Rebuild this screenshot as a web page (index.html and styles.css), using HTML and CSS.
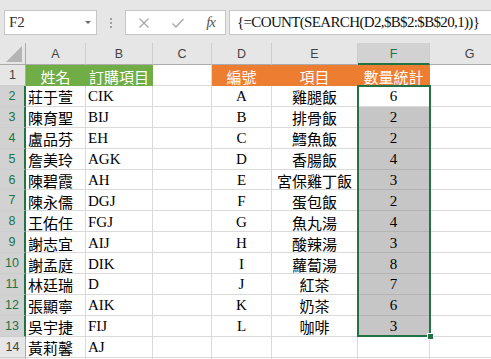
FILE: index.html
```html
<!DOCTYPE html>
<html>
<head>
    <meta charset="utf-8">
    <title>數量統計</title>
    <link rel="stylesheet" href="styles.css">
</head>
<body>
    <div class="toolbar">
        <div class="namebox"><span>F2</span><i class="caret"></i></div>
        <div class="grip"><i></i><i></i><i></i></div>
        <div class="fbtns">
            <svg class="icon" width="12" height="12" viewBox="0 0 12 12"><path d="M1.5 1.5L10.5 10.5M10.5 1.5L1.5 10.5" stroke="#a8a8a8" stroke-width="1.3" fill="none"/></svg>
            <svg class="icon" width="14" height="12" viewBox="0 0 14 12"><path d="M1.5 6.5L5 10L12.5 2" stroke="#a8a8a8" stroke-width="1.4" fill="none"/></svg>
            <span class="fx">fx</span>
        </div>
        <div class="formula">{=COUNT(SEARCH(D2,$B$2:$B$20,1))}</div>
    </div>

    <div class="sheet">
        <!-- column headers -->
        <div class="corner"><svg width="16" height="16" viewBox="0 0 16 16"><path d="M16 0V16H0Z" fill="#b4b4b4"/></svg></div>
        <div class="ch">A</div>
        <div class="ch">B</div>
        <div class="ch">C</div>
        <div class="ch">D</div>
        <div class="ch">E</div>
        <div class="ch active">F</div>
        <div class="ch">G</div>

        <!-- row 1 -->
        <div class="rh">1</div>
        <div class="cell grn">姓名</div>
        <div class="cell grn">訂購項目</div>
        <div class="cell"></div>
        <div class="cell org">編號</div>
        <div class="cell org">項目</div>
        <div class="cell org">數量統計</div>
        <div class="cell"></div>

        <div class="rh on">2</div>
        <div class="cell">莊于萱</div><div class="cell">CIK</div><div class="cell"></div>
        <div class="cell ctr">A</div><div class="cell ctr">雞腿飯</div><div class="cell ctr">6</div><div class="cell"></div>

        <div class="rh on">3</div>
        <div class="cell">陳育聖</div><div class="cell">BIJ</div><div class="cell"></div>
        <div class="cell ctr">B</div><div class="cell ctr">排骨飯</div><div class="cell ctr sel">2</div><div class="cell"></div>

        <div class="rh on">4</div>
        <div class="cell">盧品芬</div><div class="cell">EH</div><div class="cell"></div>
        <div class="cell ctr">C</div><div class="cell ctr">鱈魚飯</div><div class="cell ctr sel">2</div><div class="cell"></div>

        <div class="rh on">5</div>
        <div class="cell">詹美玲</div><div class="cell">AGK</div><div class="cell"></div>
        <div class="cell ctr">D</div><div class="cell ctr">香腸飯</div><div class="cell ctr sel">4</div><div class="cell"></div>

        <div class="rh on">6</div>
        <div class="cell">陳碧霞</div><div class="cell">AH</div><div class="cell"></div>
        <div class="cell ctr">E</div><div class="cell ctr">宮保雞丁飯</div><div class="cell ctr sel">3</div><div class="cell"></div>

        <div class="rh on">7</div>
        <div class="cell">陳永儒</div><div class="cell">DGJ</div><div class="cell"></div>
        <div class="cell ctr">F</div><div class="cell ctr">蛋包飯</div><div class="cell ctr sel">2</div><div class="cell"></div>

        <div class="rh on">8</div>
        <div class="cell">王佑任</div><div class="cell">FGJ</div><div class="cell"></div>
        <div class="cell ctr">G</div><div class="cell ctr">魚丸湯</div><div class="cell ctr sel">4</div><div class="cell"></div>

        <div class="rh on">9</div>
        <div class="cell">謝志宜</div><div class="cell">AIJ</div><div class="cell"></div>
        <div class="cell ctr">H</div><div class="cell ctr">酸辣湯</div><div class="cell ctr sel">3</div><div class="cell"></div>

        <div class="rh on">10</div>
        <div class="cell">謝孟庭</div><div class="cell">DIK</div><div class="cell"></div>
        <div class="cell ctr">I</div><div class="cell ctr">蘿蔔湯</div><div class="cell ctr sel">8</div><div class="cell"></div>

        <div class="rh on">11</div>
        <div class="cell">林廷瑞</div><div class="cell">D</div><div class="cell"></div>
        <div class="cell ctr">J</div><div class="cell ctr">紅茶</div><div class="cell ctr sel">7</div><div class="cell"></div>

        <div class="rh on">12</div>
        <div class="cell">張顯寧</div><div class="cell">AIK</div><div class="cell"></div>
        <div class="cell ctr">K</div><div class="cell ctr">奶茶</div><div class="cell ctr sel">6</div><div class="cell"></div>

        <div class="rh on">13</div>
        <div class="cell">吳宇捷</div><div class="cell">FIJ</div><div class="cell"></div>
        <div class="cell ctr">L</div><div class="cell ctr">咖啡</div><div class="cell ctr sel">3</div><div class="cell"></div>

        <div class="rh">14</div>
        <div class="cell">黃莉馨</div><div class="cell">AJ</div><div class="cell"></div>
        <div class="cell"></div><div class="cell"></div><div class="cell"></div><div class="cell"></div>

        <!-- row 15, only its top edge is in view -->
        <div class="rh"></div>
        <div class="cell"></div><div class="cell"></div><div class="cell"></div>
        <div class="cell"></div><div class="cell"></div><div class="cell"></div><div class="cell"></div>

        <!-- selected range F2:F13, drawn over the grid area -->
        <div class="range"><i class="handle"></i></div>
    </div>
</body>
</html>
```

FILE: styles.css
```css
body {
    margin: 0;
    width: 491px;
    height: 359px;
    overflow: hidden;
    background: #fff;
    font-family: "Liberation Serif", "Noto Sans CJK TC", serif;
}

/* formula bar */
.toolbar {
    display: flex;
    align-items: center;
    height: 43px;
    padding: 2px 0 0 4px;
    box-sizing: border-box;
    background: #e6e6e6;
}

.namebox,
.fbtns,
.formula {
    height: 25px;
    box-sizing: border-box;
    background: #fff;
    border: 1px solid #c6c6c6;
    display: flex;
    align-items: center;
}

.namebox {
    width: 93px;
    padding: 0 5px 0 4px;
    justify-content: space-between;
    font-size: 15px;
    color: #333;
}

.caret {
    border-top: 3px solid #6a6a6a;
    border-left: 3px solid transparent;
    border-right: 3px solid transparent;
}

.grip {
    width: 28px;
    display: flex;
    flex-direction: column;
    align-items: center;
    gap: 2px;
}

.grip i {
    width: 2px;
    height: 2px;
    background: #a0a0a0;
}

.fbtns {
    width: 101px;
    padding: 0 10px 0 12px;
    justify-content: space-between;
}

.fx {
    font-style: italic;
    font-size: 15px;
    color: #555;
    letter-spacing: -1px;
}

.formula {
    flex: 1;
    margin: 0 -2px 0 3px;
    padding-left: 7px;
    font-size: 15px;
    letter-spacing: -0.65px;
    color: #111;
}

/* sheet grid */
.sheet {
    position: relative;
    display: grid;
    grid-template-columns: 26px 60px 67px 59px 60px 86px 72px 80px;
    grid-template-rows: 22px 21px repeat(14, 20.9px);
}

.corner,
.ch,
.rh {
    background: #e6e6e6;
    color: #444;
    font-family: "Liberation Sans", Arial, sans-serif;
    font-size: 12.5px;
    display: flex;
    align-items: center;
    justify-content: center;
    box-sizing: border-box;
}

.corner {
    border-right: 1px solid #ababab;
    border-bottom: 1px solid #ababab;
    justify-content: flex-end;
    align-items: flex-end;
    padding: 0 3px 2px 0;
}

.ch {
    border-right: 1px solid #cdcdcd;
    border-bottom: 1px solid #ababab;
    padding-top: 1px;
}

.ch.active {
    background: #d2d2d2;
    color: #217346;
    border-bottom: 2px solid #217346;
}

.rh {
    border-right: 1px solid #ababab;
    border-bottom: 1px solid #cdcdcd;
}

.rh.on {
    background: #d2d2d2;
    color: #217346;
    border-right: 2px solid #217346;
}

.cell {
    font-size: 15px;
    color: #000;
    border-right: 1px solid #dadada;
    border-bottom: 1px solid #dadada;
    box-sizing: border-box;
    display: flex;
    align-items: center;
    padding: 2px 2px 0;
    white-space: nowrap;
    overflow: hidden;
}

.ctr {
    justify-content: center;
}

.grn,
.org {
    justify-content: center;
    color: #fff;
    border-color: transparent;
}

.grn {
    background: #70ad47;
}

.org {
    background: #ed7d31;
}

.sel {
    background: #c6c6c6;
    border-bottom-color: #b4b4b4;
}

/* absolutely positioned grid child: its grid area is the containing block */
.range {
    position: absolute;
    grid-column: 7 / 8;
    grid-row: 3 / 15;
    top: -1px;
    left: -1px;
    right: -1px;
    bottom: 0;
    border: 2px solid #217346;
    pointer-events: none;
}

.handle {
    position: absolute;
    right: -5px;
    bottom: -5px;
    width: 5px;
    height: 5px;
    background: #217346;
    border: 1px solid #fff;
}
```
